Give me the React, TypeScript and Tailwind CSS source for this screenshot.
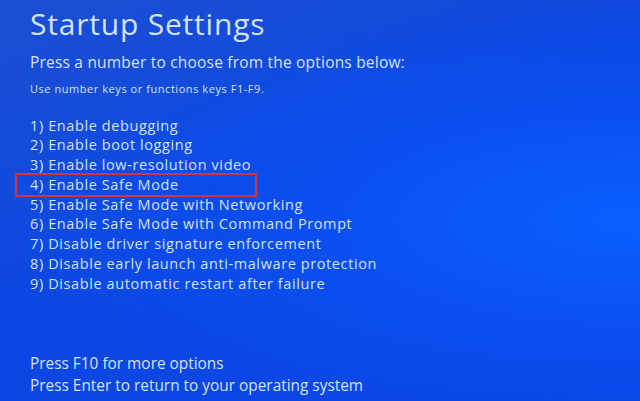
const options = [
  '1) Enable debugging',
  '2) Enable boot logging',
  '3) Enable low-resolution video',
  '4) Enable Safe Mode',
  '5) Enable Safe Mode with Networking',
  '6) Enable Safe Mode with Command Prompt',
  '7) Disable driver signature enforcement',
  '8) Disable early launch anti-malware protection',
  '9) Disable automatic restart after failure',
];

export default function App() {
  return (
    <div
      className="w-[640px] h-[401px] overflow-hidden flex flex-col text-[#d4e2ff] bg-[#0b48e0] bg-[radial-gradient(ellipse_at_100%_55%,#0a60ff_0%,#0a4ff0_35%,transparent_70%),linear-gradient(160deg,#1b4fd2_0%,#0c47e2_50%,#0a44e6_100%)] pl-[30px]"
      style={{ fontFamily: '"Open Sans", "Noto Sans", sans-serif' }}
    >
      <h1 className="text-[30px] h-[30px] leading-[30px] mt-[9px] tracking-[0.8px]">Startup Settings</h1>
      <p className="text-[15.5px] h-[15.5px] leading-[15.5px] mt-[16px] tracking-[0.2px]">
        Press a number to choose from the options below:
      </p>
      <p className="text-[11px] h-[11px] leading-[11px] mt-[12px] tracking-[0.55px]">
        Use number keys or functions keys F1-F9.
      </p>
      <ul className="mt-[22px] flex flex-col">
        {options.map((o, i) => (
          <li key={o} className="relative h-[19.75px] text-[14.5px] leading-[19.75px] tracking-[0.6px]">
            {i === 3 && (
              <span className="absolute left-[-15px] top-[-2px] w-[242px] h-[24px] border-2 border-[#d4343c]" />
            )}
            {o}
          </li>
        ))}
      </ul>
      <div className="mt-auto mb-[4px] flex flex-col text-[15.4px] leading-[22px]">
        <p>Press F10 for more options</p>
        <p>Press Enter to return to your operating system</p>
      </div>
    </div>
  );
}
